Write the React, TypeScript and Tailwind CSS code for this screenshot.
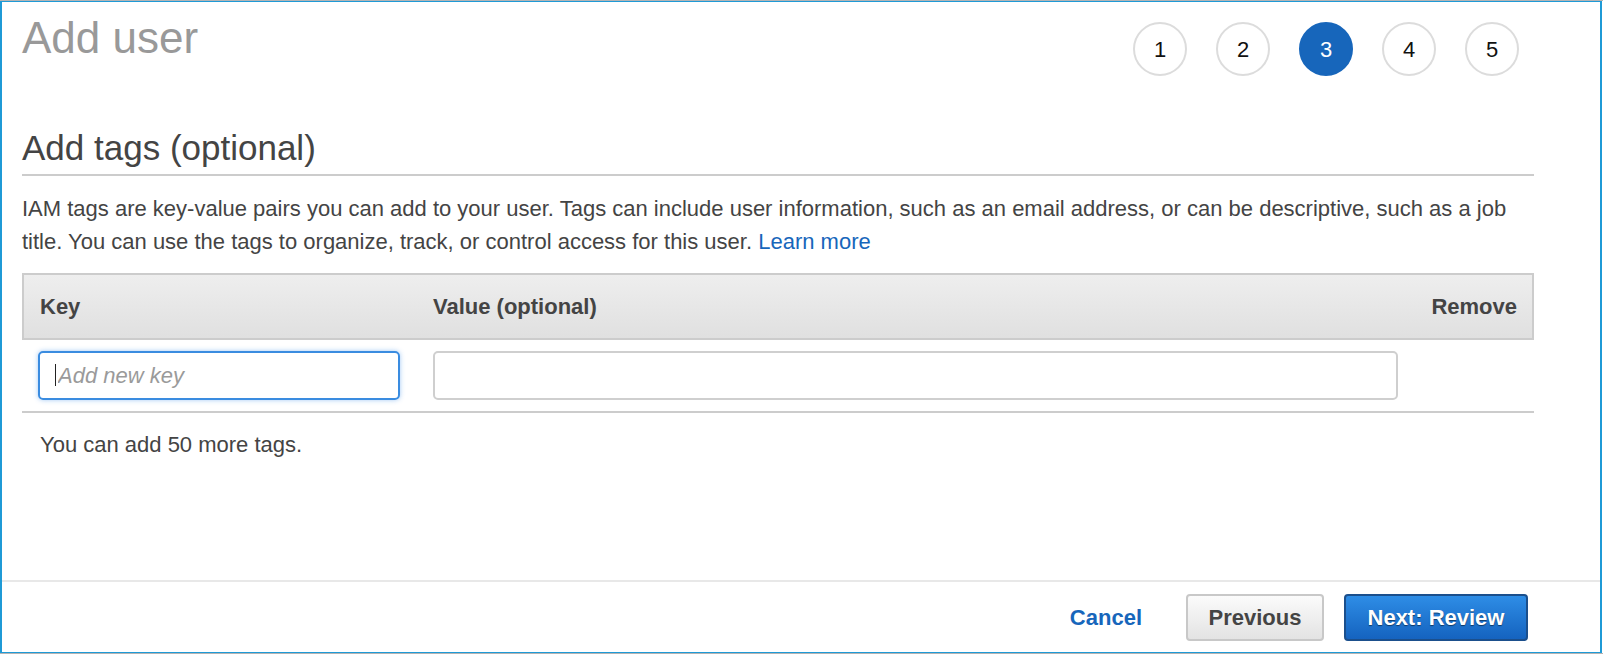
import React from 'react';

const steps = [1, 2, 3, 4, 5];
const activeStep = 3;

const StepCircle: React.FC<{ n: number; active: boolean }> = ({ n, active }) => (
  <div
    className={
      active
        ? 'w-[54px] h-[54px] rounded-full bg-[#1766bb] border-2 border-[#1766bb] flex items-center justify-center text-[22px] text-white'
        : 'w-[54px] h-[54px] rounded-full bg-white border-2 border-[#dcdcdc] flex items-center justify-center text-[22px] text-[#111111]'
    }
  >
    {n}
  </div>
);

const App: React.FC = () => {
  return (
    <div className="w-[1603px] h-[654px] bg-white border-t border-b border-[#b4b4b4] font-['Liberation_Sans',Arial,sans-serif]">
      <div className="w-[1602px] h-full border-x-2 border-y border-[#1f9ad6] flex flex-col">
        <div className="pl-[20px] pr-[66px]">
          {/* title + wizard steps */}
          <div className="flex justify-between items-start">
            <h1 className="mt-[14px] text-[44px] leading-[44px] text-[#999999] font-normal">Add user</h1>
            <div className="mt-[20px] mr-[15px] flex gap-[29px]">
              {steps.map((s) => (
                <StepCircle key={s} n={s} active={s === activeStep} />
              ))}
            </div>
          </div>

          <h2 className="mt-[52px] pb-[6px] border-b-2 border-[#cccccc] text-[35px] leading-[40px] text-[#444444] font-normal">
            Add tags (optional)
          </h2>

          <p className="mt-[16px] text-[22px] leading-[33px] text-[#444444]">
            IAM tags are key-value pairs you can add to your user. Tags can include user information, such as an email
            address, or can be descriptive, such as a job title. You can use the tags to organize, track, or control
            access for this user. <a className="text-[#1766bb]">Learn more</a>
          </p>

          {/* tags table */}
          <div className="mt-[15px]">
            <div className="h-[67px] flex items-center border-2 border-[#cccccc] bg-linear-to-b from-[#eeeeee] to-[#e0e0e0] text-[22px] font-bold text-[#444444]">
              <div className="w-[409px] pl-[16px]">Key</div>
              <div className="flex-1">Value (optional)</div>
              <div className="pr-[15px]">Remove</div>
            </div>
            <div className="h-[73px] flex items-start pt-[11px] pl-[16px] border-b-2 border-[#cccccc]">
              <div className="relative w-[362px] h-[49px]">
                <input
                  className="w-full h-full rounded-[5px] border-2 border-[#3a8ce0] shadow-[0_0_5px_rgba(50,135,230,0.45)] pl-[18px] text-[22px] italic text-[#444444] placeholder:text-[#9a9a9a] outline-none"
                  placeholder="Add new key"
                  readOnly
                />
                <span className="absolute left-[17px] top-[13px] w-[1px] h-[22px] bg-[#222222]" />
              </div>
              <input
                className="ml-[33px] w-[965px] h-[49px] rounded-[5px] border-2 border-[#cfcfcf] bg-white outline-none"
                readOnly
              />
            </div>
          </div>

          <p className="mt-[15px] pl-[18px] text-[22px] leading-[33px] text-[#444444]">You can add 50 more tags.</p>
        </div>

        {/* footer */}
        <div className="mt-auto border-t-2 border-[#e8e8e8] pt-[12px] pb-[11px] pr-[72px] flex justify-end items-center">
          <a className="text-[22px] font-bold text-[#1766bb] mr-[44px]">Cancel</a>
          <button className="w-[138px] h-[47px] rounded-[4px] border-2 border-[#c8c8c8] bg-linear-to-b from-[#fbfbfb] to-[#e3e3e3] text-[22px] font-bold text-[#444444]">
            Previous
          </button>
          <button className="ml-[20px] w-[184px] h-[47px] rounded-[4px] border-2 border-[#1b4f8c] bg-linear-to-b from-[#2e8de6] to-[#1563bf] text-[22px] font-bold text-white [text-shadow:0_1px_1px_rgba(0,0,0,0.5)]">
            Next: Review
          </button>
        </div>
      </div>
    </div>
  );
};

export default App;
